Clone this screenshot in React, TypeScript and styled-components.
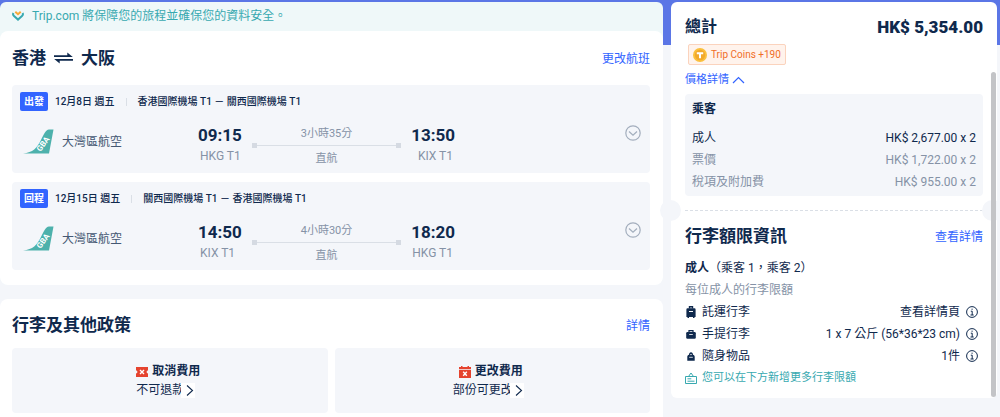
import React from "react";
import styled, { createGlobalStyle } from "styled-components";

const ink = "#0f294d";
const slate = "#455873";
const muted = "#8592a6";
const blue = "#3264ff";
const teal = "#38a9b0";
const surface = "#f4f6fa";

const GlobalStyle = createGlobalStyle`
  *, *::before, *::after { box-sizing: border-box; }
  body {
    margin: 0;
    background: ${surface};
    color: ${ink};
    font-family: Roboto, "Noto Sans CJK TC", sans-serif;
    font-size: 12px;
    line-height: 22px;
  }
  h1, h2, h3, p, dl, dd, dt, ul { margin: 0; padding: 0; font-size: inherit; }
  ul { list-style: none; }
  svg { display: block; flex: none; }
`;

const Page = styled.div`
  display: grid;
  grid-template-columns: minmax(0, 1fr) 326px;
  gap: 8px;
  min-height: 100vh;
  padding: 2px 3px 0 0;
  background: linear-gradient(#5b76e6 45px, ${surface} 45px);
`;

const Main = styled.main`
  display: flex;
  flex-direction: column;
  gap: 14px;
`;

const Booking = styled.div`
  border-radius: 6px 6px 8px 8px;
  background: #eff8f9;
`;

const Banner = styled.p`
  display: flex;
  align-items: center;
  gap: 8px;
  height: 29px;
  padding: 0 12px 2px;
  color: ${teal};
`;

const Card = styled.section<{ $grow?: boolean }>`
  flex: ${(p) => (p.$grow ? "1" : "none")};
  padding: 0 13px ${(p) => (p.$grow ? 4 : 15)}px 12px;
  border-radius: ${(p) => (p.$grow ? "8px 8px 0 0" : "8px")};
  background: #fff;
`;

const CardHead = styled.header<{ $height: number; $top?: number }>`
  display: flex;
  align-items: center;
  justify-content: space-between;
  height: ${(p) => p.$height}px;
  padding-top: ${(p) => p.$top ?? 0}px;
`;

const Title = styled.h2`
  display: flex;
  align-items: center;
  gap: 8px;
  font-size: 17px;
  font-weight: 700;
  line-height: 24px;
`;

const Link = styled.a`
  padding-top: 2px;
  color: ${blue};
  text-decoration: none;
`;

const Legs = styled.div`
  display: flex;
  flex-direction: column;
  gap: 9px;
`;

const LegBox = styled.article`
  height: 88px;
  padding: 7px 8px;
  border-radius: 4px;
  background: ${surface};
`;

const LegHead = styled.div`
  display: flex;
  align-items: center;
  height: 19px;
  font-size: 10px;
  font-weight: 500;
`;

const Tag = styled.span`
  margin-right: 7px;
  padding: 0 4px;
  border-radius: 2px;
  background: ${blue};
  color: #fff;
  font-size: 10px;
  font-weight: 700;
  line-height: 19px;
`;

const Divider = styled.span`
  width: 1px;
  height: 8px;
  margin: 0 11px;
  background: #dadfe6;
`;

const LegBody = styled.div`
  display: grid;
  grid-template-columns: 178fr 257fr 187fr;
  align-items: start;
  padding-top: 12px;
`;

const Airline = styled.div`
  display: flex;
  align-items: center;
  gap: 8px;
  padding: 6px 0 0 3px;
  color: ${slate};
`;

const Trip = styled.div`
  display: flex;
  justify-content: space-between;
`;

const Stop = styled.div<{ $end?: boolean }>`
  width: 46px;
  text-align: ${(p) => (p.$end ? "right" : "left")};
  white-space: nowrap;
`;

const Time = styled.time`
  display: block;
  font-size: 17px;
  font-weight: 700;
  line-height: 24px;
`;

const Terminal = styled.span`
  display: block;
  padding: 0 2px;
  color: ${muted};
  line-height: 18px;
`;

const Route = styled.div`
  flex: 1;
  margin: 5px 8px 0;
  color: ${muted};
  font-size: 11px;
  line-height: 12px;
  text-align: center;
`;

const Track = styled.div`
  display: flex;
  align-items: center;
  justify-content: space-between;
  height: 5px;
  margin: 3px 0 5px;
  background: linear-gradient(#dadfe6, #dadfe6) center / 100% 1px no-repeat;

  &::before,
  &::after {
    content: "";
    width: 5px;
    height: 5px;
    background: #d5dae2;
  }
`;

const IconButton = styled.button`
  display: inline-flex;
  justify-self: end;
  margin: 0;
  padding: 0;
  border: 0;
  background: none;
  color: inherit;
  cursor: pointer;
`;

const Toggle = styled(IconButton)`
  padding: 2px 1px 0;
  color: #a3aebd;
`;

const Policies = styled.div`
  display: grid;
  grid-template-columns: 1fr 1fr;
  gap: 7px;
`;

const Policy = styled.div`
  display: flex;
  flex-direction: column;
  align-items: center;
  height: 65px;
  padding: 14px 3px 0 0;
  border-radius: 4px;
  background: ${surface};
  line-height: 19px;
`;

const PolicyName = styled.h3`
  display: flex;
  align-items: center;
  gap: 4px;
  font-weight: 700;
`;

const PolicyValue = styled.div`
  display: flex;
  align-items: center;
  padding-right: 5px;
`;

const More = styled(IconButton)`
  z-index: 1;
  margin-left: -3px;
  background: #fff;
`;

const Side = styled.aside`
  position: relative;
  align-self: start;
  padding: 12px 14px 9px;
  border-radius: 6px;
  background: #fff;
`;

const Total = styled.div`
  display: flex;
  align-items: center;
  justify-content: space-between;
  line-height: 26px;
  font-weight: 700;
`;

const TotalLabel = styled.h2`
  font-size: 16px;
`;

const TotalPrice = styled.strong`
  font-size: 17px;
`;

const Coins = styled.div`
  display: inline-flex;
  align-items: center;
  gap: 4px;
  height: 21px;
  margin: 4px 0 0 3px;
  padding: 0 4px;
  border: 1px solid #fbd3bd;
  border-radius: 2px;
  background: #fff3ec;
  color: #f06e27;
  font-size: 10px;
  vertical-align: top;
`;

const DetailToggle = styled.button`
  display: flex;
  align-items: center;
  gap: 3px;
  margin: 4px 0 3px;
  padding: 0;
  border: 0;
  background: none;
  color: ${blue};
  font: inherit;
  font-size: 11px;
  cursor: pointer;
`;

const Breakdown = styled.div`
  padding: 4px 7px 3px;
  border-radius: 4px;
  background: ${surface};
`;

const BreakdownTitle = styled.h3`
  margin-bottom: 7px;
  font-weight: 700;
`;

const Row = styled.div<{ $soft?: boolean }>`
  display: flex;
  justify-content: space-between;
  color: ${(p) => (p.$soft ? muted : "inherit")};
`;

const Tear = styled.div`
  position: relative;
  height: 1px;
  margin: 14px 0 13px;
  background: repeating-linear-gradient(90deg, #dadfe6 0 3px, transparent 3px 5px);
`;

const Notch = styled.span<{ $side: "left" | "right" }>`
  position: absolute;
  top: -10px;
  ${(p) => p.$side}: ${(p) => (p.$side === "left" ? -25 : -20)}px;
  width: 21px;
  height: 21px;
  border-radius: 50%;
  background: ${surface};
`;

const Allowance = styled.div`
  margin-top: 9px;
`;

const Muted = styled.p`
  color: ${muted};
`;

const Bag = styled.li`
  display: flex;
  align-items: center;
  gap: 5px;
`;

const BagValue = styled.span`
  display: flex;
  align-items: center;
  gap: 6px;
  margin-left: auto;
  padding-right: 5px;
`;

const AddMore = styled.p`
  display: flex;
  align-items: center;
  gap: 5px;
  color: ${teal};
  font-size: 11px;
`;

const Thumb = styled.div`
  position: absolute;
  top: 70px;
  right: 1px;
  bottom: 1px;
  width: 5px;
  border-radius: 3px;
  background: #c3c4c7;
`;

const ShieldHeart = () => (
  <svg width="12" height="10" viewBox="0 0 12 10" fill="none" strokeWidth="2" aria-hidden>
    <path d="M3.300 .8 6 3.200 8.700 .8" stroke="#f8a937" />
    <path d="M1.400 2C.7 3.300 1 4.200 2 5.100L6 8.600 10 5.100C11 4.200 11.300 3.300 10.600 2" stroke={teal} />
  </svg>
);

const RoundTrip = () => (
  <svg width="19" height="12" viewBox="0 0 19 12" fill={ink} aria-hidden>
    <path d="M0 3.300h13.300V.6L18.800 5H0zM19 8.700H5.700v2.700L.2 7H19z" />
  </svg>
);

const TailLogo = () => (
  <svg width="31" height="25" viewBox="0 0 31 25" aria-hidden>
    <path d="M0 24.500C10 23.500 14 19 18 11 21 5 22.500 1 26 0.500H30.500L26 24.500z" fill="#4db1ac" />
    <text
      x="0"
      y="0"
      transform="translate(17.500 23) rotate(-54)"
      fill="#fff"
      fontFamily="Roboto, sans-serif"
      fontSize="8"
      fontWeight="700"
    >
      GBA
    </text>
  </svg>
);

const CircleDown = () => (
  <svg width="16" height="16" viewBox="0 0 16 16" fill="none" stroke="currentColor" strokeWidth="1.200" aria-hidden>
    <circle cx="8" cy="8" r="7.200" />
    <path d="M4 6.500 8 10.200 12 6.500" />
  </svg>
);

const ChevronUp = () => (
  <svg width="13" height="8" viewBox="0 0 13 8" fill="none" stroke="currentColor" strokeWidth="1.200" aria-hidden>
    <path d="M1 7 6.500 1.500 12 7" />
  </svg>
);

const ChevronRight = () => (
  <svg width="14" height="15" viewBox="0 0 14 15" fill="none" stroke="currentColor" strokeWidth="1.100" aria-hidden>
    <path d="M6 2.500 11.500 7.500 6 12.500" />
  </svg>
);

const TicketCross = () => (
  <svg width="12" height="10" viewBox="0 0 12 10" aria-hidden>
    <path d="M0 0h12v3.600a1.400 1.400 0 0 0 0 2.800V10H0V6.400a1.400 1.400 0 0 0 0-2.800z" fill="#e5432e" />
    <path d="m4 3 4 4M8 3 4 7" stroke="#fff" strokeWidth="1.400" />
  </svg>
);

const CalendarCross = () => (
  <svg width="12" height="12" viewBox="0 0 12 12" aria-hidden>
    <path d="M0 1h2V0h1.500v1h5V0H10v1h2v2H0zM0 3.800h12V12H0z" fill="#e5432e" />
    <path d="m4.200 5.700 3.600 4M7.800 5.700l-3.600 4" stroke="#fff" strokeWidth="1.400" />
  </svg>
);

const CoinIcon = () => (
  <svg width="14" height="14" viewBox="0 0 14 14" aria-hidden>
    <circle cx="7" cy="7" r="7" fill="#fac03d" />
    <circle cx="7" cy="7" r="5.200" fill="#f2a92c" />
    <path d="M3.800 4.300h6.400v2H8v4H6v-4H3.800z" fill="#fff" />
  </svg>
);

const Suitcase = () => (
  <svg width="12" height="14" viewBox="0 0 12 14" aria-hidden>
    <path d="M4.500 3.500V1.700h3v1.800" fill="none" stroke={ink} strokeWidth="1.400" />
    <path d="M2.600 3.200h6.800a1.200 1.200 0 0 1 1.200 1.200V12H9.500v1H8v-1H4v1H2.500v-1H1.400V4.400a1.200 1.200 0 0 1 1.200-1.200z" fill={ink} />
    <path d="M4 6.500h4" stroke="#fff" />
  </svg>
);

const CarryOn = () => (
  <svg width="12" height="14" viewBox="0 0 12 14" aria-hidden>
    <path d="M4 5.500V3.700h4v1.800" fill="none" stroke={ink} strokeWidth="1.200" />
    <rect x="1.200" y="5" width="9.600" height="6.800" rx="1.200" fill={ink} />
    <path d="M4.200 7.500h3.600" stroke="#fff" strokeWidth=".8" />
  </svg>
);

const Handbag = () => (
  <svg width="12" height="14" viewBox="0 0 12 14" aria-hidden>
    <path d="M2.300 11.800V7.800C2.300 6.800 3 6 4 5.800 4 4 4.800 3.200 6 3.200s2 .8 2 2.600c1 .2 1.700 1 1.700 2v4z" fill={ink} />
    <path d="M4.200 8.300h3.600M5.200 5.600h1.600" stroke="#fff" strokeWidth=".8" />
  </svg>
);

const Info = () => (
  <svg width="12" height="12" viewBox="0 0 12 12" fill="none" stroke="currentColor" aria-hidden>
    <circle cx="6" cy="6" r="5.400" />
    <path d="M4.800 5.200H6.200V9M4.500 9h3.200M5.500 3.200h1.200" />
  </svg>
);

const AddBag = () => (
  <svg width="12" height="12" viewBox="0 0 12 12" fill="none" stroke="currentColor" aria-hidden>
    <path d="M.5 4.500h11v7H.5zM3.500 4.500 6 1l2.500 3.500M2.500 6.800h3.800M2.500 9.200h7" />
  </svg>
);

type LegData = {
  tag: string;
  date: string;
  from: string;
  to: string;
  depart: [string, string];
  arrive: [string, string];
  duration: string;
};

const legs: LegData[] = [
  {
    tag: "出發",
    date: "12月8日 週五",
    from: "香港國際機場 T1",
    to: "關西國際機場 T1",
    depart: ["09:15", "HKG T1"],
    arrive: ["13:50", "KIX T1"],
    duration: "3小時35分",
  },
  {
    tag: "回程",
    date: "12月15日 週五",
    from: "關西國際機場 T1",
    to: "香港國際機場 T1",
    depart: ["14:50", "KIX T1"],
    arrive: ["18:20", "HKG T1"],
    duration: "4小時30分",
  },
];

const Leg = ({ leg }: { leg: LegData }) => (
  <LegBox>
    <LegHead>
      <Tag>{leg.tag}</Tag>
      {leg.date}
      <Divider />
      {leg.from} － {leg.to}
    </LegHead>
    <LegBody>
      <Airline>
        <TailLogo />
        大灣區航空
      </Airline>
      <Trip>
        <Stop>
          <Time>{leg.depart[0]}</Time>
          <Terminal>{leg.depart[1]}</Terminal>
        </Stop>
        <Route>
          {leg.duration}
          <Track />
          直航
        </Route>
        <Stop $end>
          <Time>{leg.arrive[0]}</Time>
          <Terminal>{leg.arrive[1]}</Terminal>
        </Stop>
      </Trip>
      <Toggle aria-label="展開航班">
        <CircleDown />
      </Toggle>
    </LegBody>
  </LegBox>
);

const prices = [
  { name: "成人", value: "HK$ 2,677.00 x 2", soft: false },
  { name: "票價", value: "HK$ 1,722.00 x 2", soft: true },
  { name: "稅項及附加費", value: "HK$ 955.00 x 2", soft: true },
];

const bags = [
  { icon: <Suitcase />, name: "託運行李", value: "查看詳情頁" },
  { icon: <CarryOn />, name: "手提行李", value: "1 x 7 公斤 (56*36*23 cm)" },
  { icon: <Handbag />, name: "隨身物品", value: "1件" },
];

const policies = [
  { icon: <TicketCross />, name: "取消費用", value: "不可退款" },
  { icon: <CalendarCross />, name: "更改費用", value: "部份可更改" },
];

export default function App() {
  return (
    <Page lang="zh-Hant">
      <GlobalStyle />
      <Main>
        <Booking>
          <Banner>
            <ShieldHeart />
            Trip.com 將保障您的旅程並確保您的資料安全。
          </Banner>
          <Card>
            <CardHead $height={54}>
              <Title>
                香港 <RoundTrip /> 大阪
              </Title>
              <Link href="#flights">更改航班</Link>
            </CardHead>
            <Legs>
              {legs.map((leg) => (
                <Leg key={leg.tag} leg={leg} />
              ))}
            </Legs>
          </Card>
        </Booking>
        <Card $grow>
          <CardHead $height={49} $top={3}>
            <Title>行李及其他政策</Title>
            <Link href="#policies">詳情</Link>
          </CardHead>
          <Policies>
            {policies.map((policy) => (
              <Policy key={policy.name}>
                <PolicyName>
                  {policy.icon}
                  {policy.name}
                </PolicyName>
                <PolicyValue>
                  {policy.value}
                  <More aria-label={policy.name}>
                    <ChevronRight />
                  </More>
                </PolicyValue>
              </Policy>
            ))}
          </Policies>
        </Card>
      </Main>
      <Side>
        <Total>
          <TotalLabel>總計</TotalLabel>
          <TotalPrice>HK$ 5,354.00</TotalPrice>
        </Total>
        <Coins>
          <CoinIcon />
          Trip Coins +190
        </Coins>
        <DetailToggle aria-expanded>
          價格詳情
          <ChevronUp />
        </DetailToggle>
        <Breakdown>
          <BreakdownTitle>乘客</BreakdownTitle>
          <dl>
            {prices.map((price) => (
              <Row key={price.name} $soft={price.soft}>
                <dt>{price.name}</dt>
                <dd>{price.value}</dd>
              </Row>
            ))}
          </dl>
        </Breakdown>
        <Tear>
          <Notch $side="left" />
          <Notch $side="right" />
        </Tear>
        <Row>
          <Title>行李額限資訊</Title>
          <Link href="#baggage">查看詳情</Link>
        </Row>
        <Allowance>
          <p>
            <b>成人</b>（乘客 1，乘客 2）
          </p>
          <Muted>每位成人的行李限額</Muted>
          <ul>
            {bags.map((bag) => (
              <Bag key={bag.name}>
                {bag.icon}
                {bag.name}
                <BagValue>
                  {bag.value}
                  <IconButton aria-label={bag.name}>
                    <Info />
                  </IconButton>
                </BagValue>
              </Bag>
            ))}
          </ul>
          <AddMore>
            <AddBag />
            您可以在下方新增更多行李限額
          </AddMore>
        </Allowance>
        <Thumb />
      </Side>
    </Page>
  );
}
